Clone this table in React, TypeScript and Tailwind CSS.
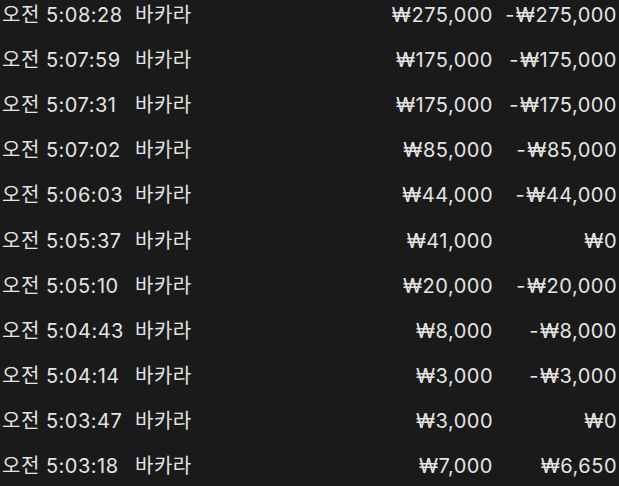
const rows = [
  { time: "오전 5:08:28", bet: "₩275,000", result: "-₩275,000" },
  { time: "오전 5:07:59", bet: "₩175,000", result: "-₩175,000" },
  { time: "오전 5:07:31", bet: "₩175,000", result: "-₩175,000" },
  { time: "오전 5:07:02", bet: "₩85,000", result: "-₩85,000" },
  { time: "오전 5:06:03", bet: "₩44,000", result: "-₩44,000" },
  { time: "오전 5:05:37", bet: "₩41,000", result: "₩0" },
  { time: "오전 5:05:10", bet: "₩20,000", result: "-₩20,000" },
  { time: "오전 5:04:43", bet: "₩8,000", result: "-₩8,000" },
  { time: "오전 5:04:14", bet: "₩3,000", result: "-₩3,000" },
  { time: "오전 5:03:47", bet: "₩3,000", result: "₩0" },
  { time: "오전 5:03:18", bet: "₩7,000", result: "₩6,650" },
];

export default function App() {
  return (
    <main
      className="w-[619px] h-[486px] overflow-hidden bg-[#1a1a1a] text-[#e4e4e4] text-[20px] tracking-[0.5px]"
      style={{ fontFamily: '"Inter", "Noto Sans CJK KR", sans-serif' }}
    >
      <div className="-mt-[8px]">
        {rows.map((row) => (
          <div key={row.time} className="flex items-center h-[45.2px] pl-[2px] pr-[2px]">
            <span className="w-[133px] whitespace-nowrap">{row.time}</span>
            <span className="flex-1">바카라</span>
            <span className="w-[120px] text-right">{row.bet}</span>
            <span className="w-[124px] text-right whitespace-nowrap">
              {row.result.startsWith("-") ? (
                <>
                  <span className="mr-[1px]">-</span>
                  {row.result.slice(1)}
                </>
              ) : (
                row.result
              )}
            </span>
          </div>
        ))}
      </div>
    </main>
  );
}
